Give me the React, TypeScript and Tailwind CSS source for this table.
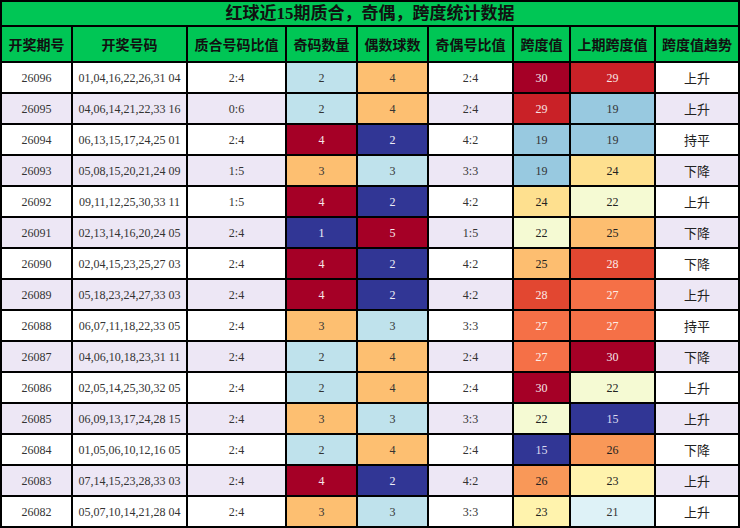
import React from 'react';

type Row = [string, string, string, number, number, string, number, number, string];

const rows: Row[] = [
    ['26096', '01,04,16,22,26,31 04', '2:4', 2, 4, '2:4', 30, 29, '上升'],
    ['26095', '04,06,14,21,22,33 16', '0:6', 2, 4, '2:4', 29, 19, '上升'],
    ['26094', '06,13,15,17,24,25 01', '2:4', 4, 2, '4:2', 19, 19, '持平'],
    ['26093', '05,08,15,20,21,24 09', '1:5', 3, 3, '3:3', 19, 24, '下降'],
    ['26092', '09,11,12,25,30,33 11', '1:5', 4, 2, '4:2', 24, 22, '上升'],
    ['26091', '02,13,14,16,20,24 05', '2:4', 1, 5, '1:5', 22, 25, '下降'],
    ['26090', '02,04,15,23,25,27 03', '2:4', 4, 2, '4:2', 25, 28, '下降'],
    ['26089', '05,18,23,24,27,33 03', '2:4', 4, 2, '4:2', 28, 27, '上升'],
    ['26088', '06,07,11,18,22,33 05', '2:4', 3, 3, '3:3', 27, 27, '持平'],
    ['26087', '04,06,10,18,23,31 11', '2:4', 2, 4, '2:4', 27, 30, '下降'],
    ['26086', '02,05,14,25,30,32 05', '2:4', 2, 4, '2:4', 30, 22, '上升'],
    ['26085', '06,09,13,17,24,28 15', '2:4', 3, 3, '3:3', 22, 15, '上升'],
    ['26084', '01,05,06,10,12,16 05', '2:4', 2, 4, '2:4', 15, 26, '下降'],
    ['26083', '07,14,15,23,28,33 03', '2:4', 4, 2, '4:2', 26, 23, '上升'],
    ['26082', '05,07,10,14,21,28 04', '2:4', 3, 3, '3:3', 23, 21, '上升'],
];

const headers = ['开奖期号', '开奖号码', '质合号码比值', '奇码数量', '偶数球数', '奇偶号比值', '跨度值', '上期跨度值', '跨度值趋势'];

// odd count column and even count column share a palette
const countColor: Record<number, string> = {
    1: 'bg-[#313695] text-[#eeeef6]',
    2: 'bg-[#bfe2ec] text-[#333]',
    3: 'bg-[#fdbf71] text-[#333]',
    4: 'bg-[#a50026] text-[#f5e6ea]',
    5: 'bg-[#a50026] text-[#f5e6ea]',
};
const evenColor: Record<number, string> = {
    1: 'bg-[#a50026] text-[#f5e6ea]',
    2: 'bg-[#313695] text-[#eeeef6]',
    3: 'bg-[#bfe2ec] text-[#333]',
    4: 'bg-[#fdbf71] text-[#333]',
    5: 'bg-[#a50026] text-[#f5e6ea]',
};

const spanColor: Record<number, string> = {
    30: 'bg-[#a50026] text-[#f5e6ea]',
    29: 'bg-[#c92127] text-[#f7e4e4]',
    28: 'bg-[#e24731] text-[#fbe9e4]',
    27: 'bg-[#f57047] text-[#fdeee8]',
    26: 'bg-[#f99858] text-[#222]',
    25: 'bg-[#fdbe70] text-[#222]',
    24: 'bg-[#fee08f] text-[#222]',
    23: 'bg-[#fff3ad] text-[#222]',
    22: 'bg-[#f5fad3] text-[#222]',
    21: 'bg-[#def2f7] text-[#333]',
    19: 'bg-[#98c9e0] text-[#333]',
    15: 'bg-[#313695] text-[#dcdcf0]',
};

const cell = 'flex items-center justify-center';

export default function App() {
    return (
        <div className="w-[740px] h-[528px] bg-white overflow-hidden font-['Liberation_Serif','Noto_Sans_CJK_SC',serif]">
            <div className="grid grid-cols-[69px_113px_97px_69px_69px_83px_55px_83px_82px] grid-rows-[23px_34px_repeat(15,29px)] gap-[2px] p-[2px] bg-black">
                <div className={`${cell} col-span-9 bg-[#00c655] text-[17px] font-bold text-[#111]`}>
                    红球近15期质合，奇偶，跨度统计数据
                </div>
                {headers.map((h) => (
                    <div key={h} className={`${cell} bg-[#00c655] text-[14px] font-bold text-[#111] font-['Noto_Sans_CJK_SC',sans-serif]`}>
                        {h}
                    </div>
                ))}
                {rows.map((r, i) => {
                    const base = i % 2 === 1 ? 'bg-[#ede7f5]' : 'bg-white';
                    return (
                        <React.Fragment key={r[0]}>
                            <div className={`${cell} ${base} text-[12px] text-[#333]`}>{r[0]}</div>
                            <div className={`${cell} ${base} text-[12px] text-[#333]`}>{r[1]}</div>
                            <div className={`${cell} ${base} text-[12px] text-[#333]`}>{r[2]}</div>
                            <div className={`${cell} ${countColor[r[3]]} text-[12px]`}>{r[3]}</div>
                            <div className={`${cell} ${evenColor[r[4]]} text-[12px]`}>{r[4]}</div>
                            <div className={`${cell} ${base} text-[12px] text-[#333]`}>{r[5]}</div>
                            <div className={`${cell} ${spanColor[r[6]]} text-[12px]`}>{r[6]}</div>
                            <div className={`${cell} ${spanColor[r[7]]} text-[12px]`}>{r[7]}</div>
                            <div className={`${cell} ${base} text-[13px] text-[#222] font-['Noto_Sans_CJK_SC',sans-serif]`}>{r[8]}</div>
                        </React.Fragment>
                    );
                })}
            </div>
        </div>
    );
}
